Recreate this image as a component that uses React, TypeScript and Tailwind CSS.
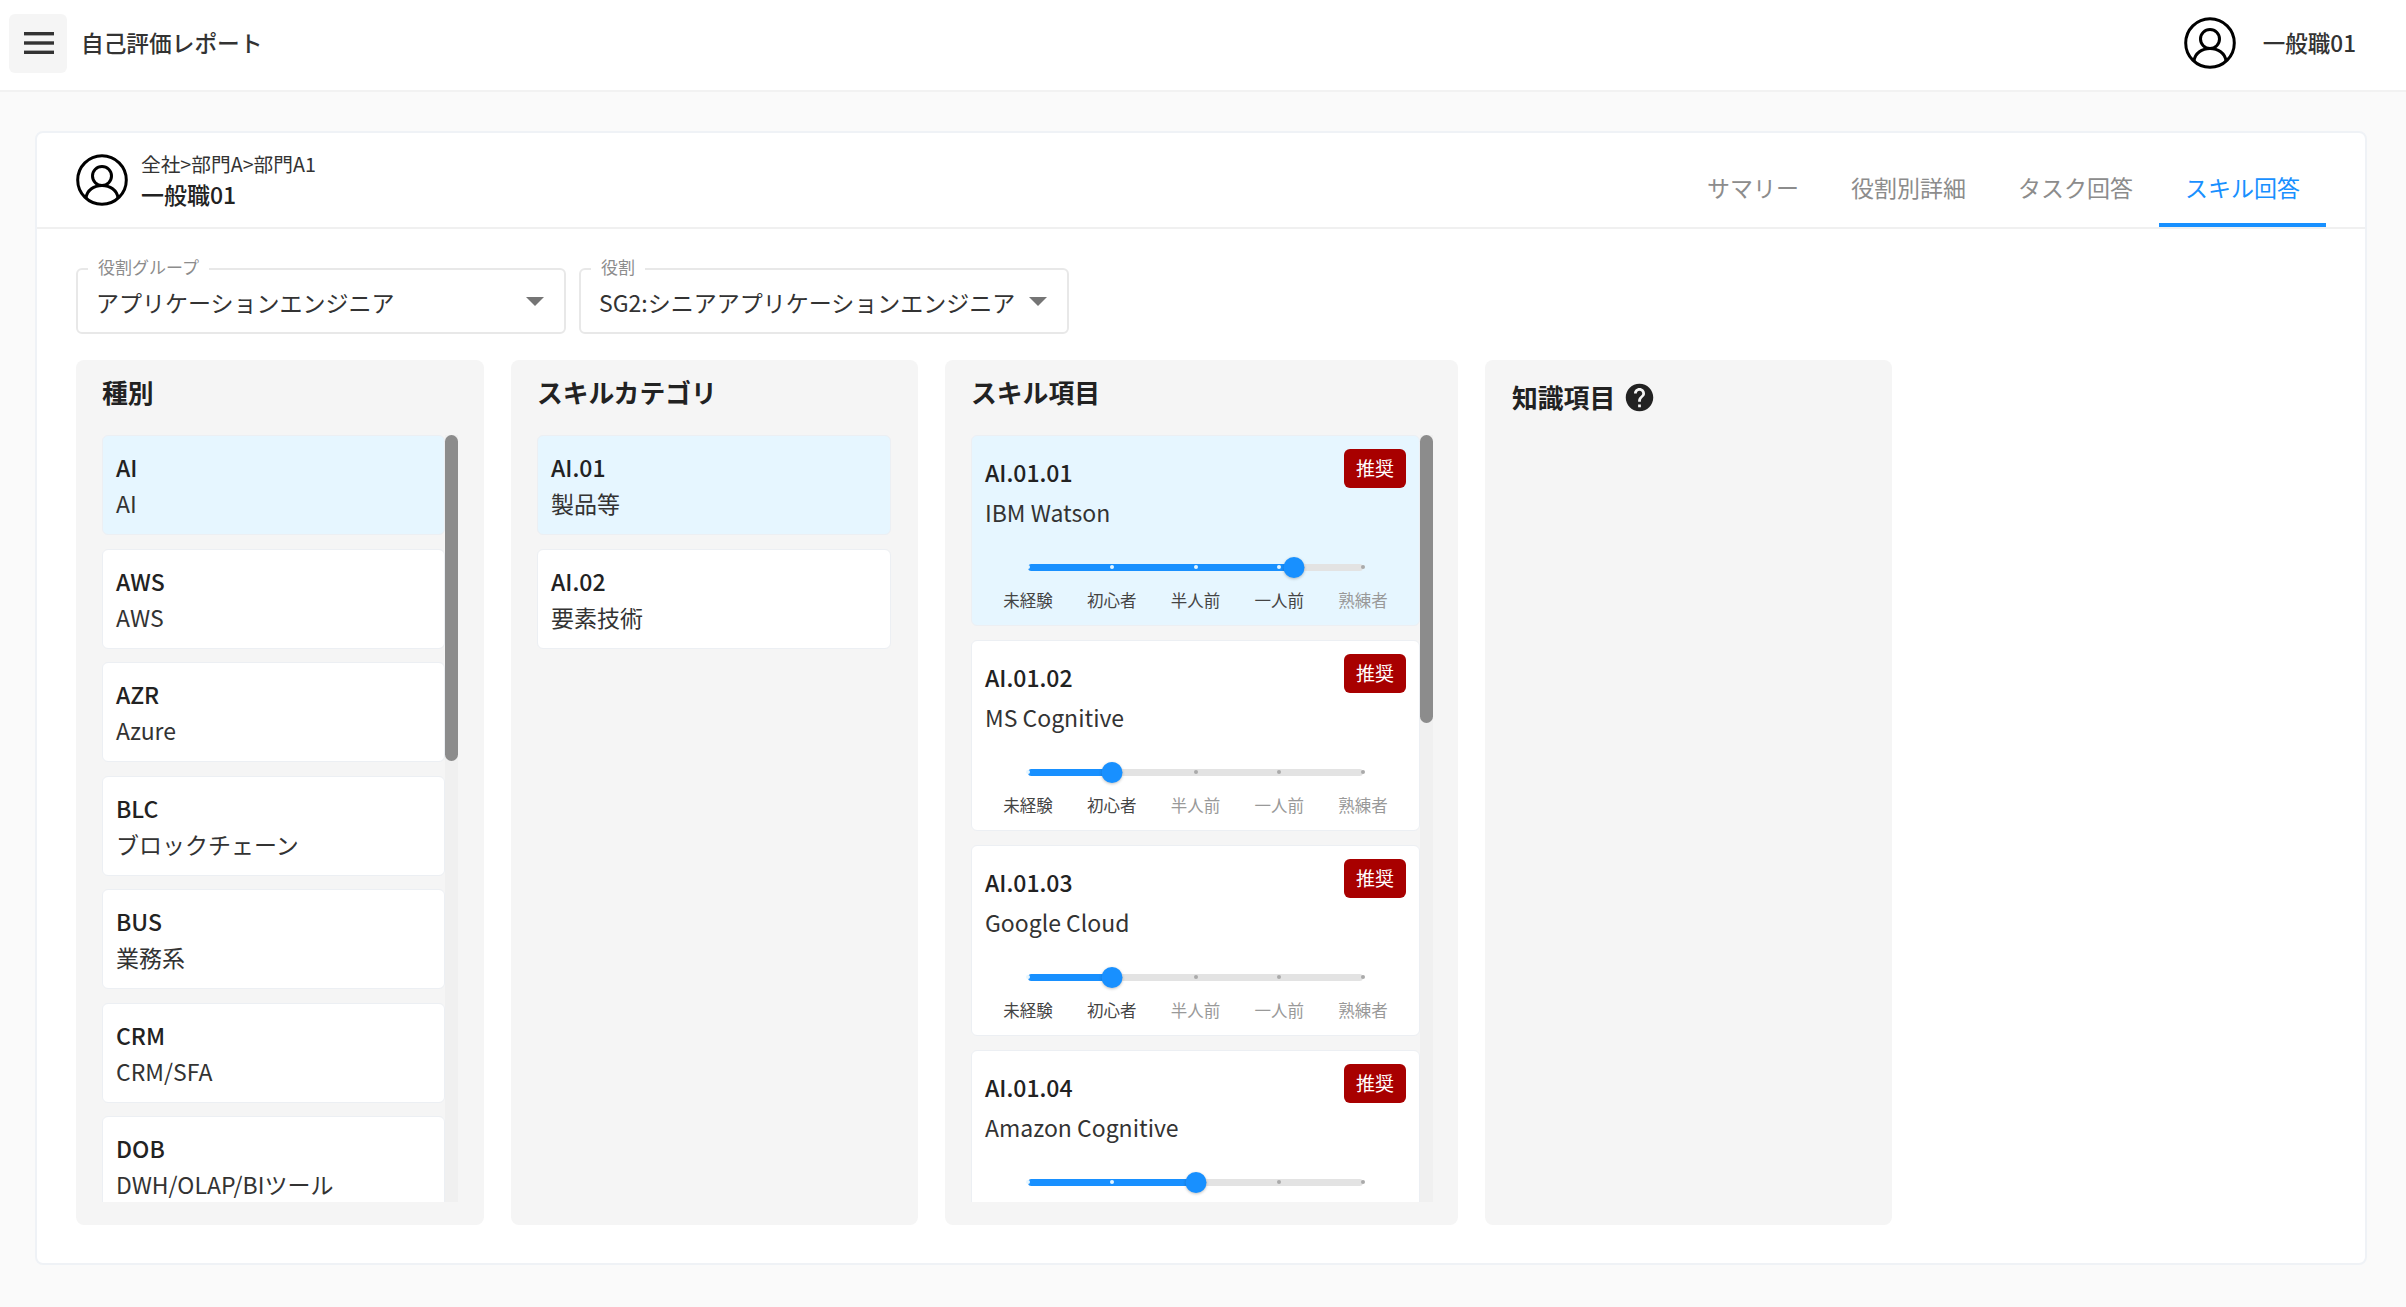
import React from "react";
import { MdHelp } from "react-icons/md";

const font = { fontFamily: '"Noto Sans CJK JP", "Noto Sans", sans-serif' };

const UserIcon = () => (
  <svg viewBox="0 0 52 52" className="h-[52px] w-[52px] shrink-0" fill="none" stroke="#000" strokeWidth="3">
    <circle cx="26" cy="26" r="24.3" />
    <circle cx="26" cy="22" r="9.5" />
    <path d="M10 44c1-8 8-12.5 16-12.5S41 36 42 44" />
  </svg>
);

const kinds = [
  ["AI", "AI"],
  ["AWS", "AWS"],
  ["AZR", "Azure"],
  ["BLC", "ブロックチェーン"],
  ["BUS", "業務系"],
  ["CRM", "CRM/SFA"],
  ["DOB", "DWH/OLAP/BIツール"],
];

const categories = [
  ["AI.01", "製品等"],
  ["AI.02", "要素技術"],
];

const skills = [
  { code: "AI.01.01", name: "IBM Watson", value: 3.18 },
  { code: "AI.01.02", name: "MS Cognitive", value: 1 },
  { code: "AI.01.03", name: "Google Cloud", value: 1 },
  { code: "AI.01.04", name: "Amazon Cognitive", value: 2 },
];

const levels = ["未経験", "初心者", "半人前", "一人前", "熟練者"];

const ListItem = ({ code, name, active }: { code: string; name: string; active?: boolean }) => (
  <div
    className={`h-[100px] shrink-0 rounded-[6px] border border-[#eceff3] px-[13px] py-[13px] ${
      active ? "bg-[#e6f6ff]" : "bg-white"
    }`}
  >
    <div className="text-[23px] leading-[37px] font-medium text-[#222]">{code}</div>
    <div className="mt-[-1px] text-[23px] leading-[37px] text-[#333]">{name}</div>
  </div>
);

const Slider = ({ value }: { value: number }) => (
  <div className="relative mx-[43px] mt-[26px] flex h-[20px] items-center">
    <div className="relative h-[7px] w-full rounded-full bg-[#e3e3e3]">
      <div className="absolute top-0 left-0 h-[7px] rounded-full bg-[#1890ff]" style={{ width: `${value * 25}%` }} />
      {[0, 1, 2, 3, 4].map((i) => (
        <span
          key={i}
          className={`absolute top-[1.5px] h-[4px] w-[4px] -translate-x-1/2 rounded-full ${
            i <= value ? "bg-[#e6f6ff]" : "bg-[#aaaaaa]"
          }`}
          style={{ left: `${i * 25}%` }}
        />
      ))}
    </div>
    <span
      className="absolute top-[-0.5px] h-[21px] w-[21px] -translate-x-1/2 rounded-full bg-[#1890ff] shadow-[0_1px_3px_rgba(0,0,0,0.25)]"
      style={{ left: `${value * 25}%` }}
    />
  </div>
);

const SkillCard = ({ code, name, value, active }: { code: string; name: string; value: number; active?: boolean }) => (
  <div
    className={`h-[191px] shrink-0 rounded-[6px] border border-[#eceff3] px-[13px] pt-[13px] ${
      active ? "bg-[#e6f6ff]" : "bg-white"
    }`}
  >
    <div className="flex items-start justify-between">
      <div className="mt-[5px] text-[23px] leading-[37px] font-medium text-[#222]">{code}</div>
      <span className="flex h-[39px] w-[62px] items-center justify-center rounded-[6px] bg-[#a80000] text-[19px] text-white">
        推奨
      </span>
    </div>
    <div className="mt-[3px] text-[23px] leading-[37px] text-[#333]">{name}</div>
    <Slider value={value} />
    <div className="mx-[1px] mt-[11px] grid grid-cols-5">
      {levels.map((label, i) => (
        <span
          key={label}
          className={`text-center text-[16.5px] leading-[24px] ${i <= value ? "text-[#444]" : "text-[#999]"}`}
        >
          {label}
        </span>
      ))}
    </div>
  </div>
);

const Scrollbar = ({ height }: { height: string }) => (
  <div className="w-[13px] shrink-0 bg-[#f0f0f0]">
    <div className={`w-[13px] rounded-full bg-[#8c8c8c] ${height}`} />
  </div>
);

const Select = ({ label, value }: { label: string; value: string }) => (
  <div className="relative flex h-[66px] w-[490px] items-center justify-between rounded-[6px] border-2 border-[#e8e8e8] pr-[20px] pl-[18px]">
    <span className="absolute top-[-15px] left-[10px] bg-white px-[10px] text-[17px] leading-[24px] text-[#8c8c8c]">
      {label}
    </span>
    <span className="mt-[2px] text-[23px] text-[#333]">{value}</span>
    <svg viewBox="0 0 18 9" className="h-[9px] w-[18px]">
      <path d="M0 0h18L9 9z" fill="#757575" />
    </svg>
  </div>
);

const tabs = ["サマリー", "役割別詳細", "タスク回答", "スキル回答"];

export default function App() {
  return (
    <div className="flex h-[1307px] w-full flex-col overflow-hidden bg-[#fafafa]" style={font}>
      <header className="flex h-[92px] shrink-0 items-center justify-between border-b-2 border-[#f2f2f2] bg-white pr-[50px] pb-[4px] pl-[9px]">
        <div className="flex items-center">
          <button className="flex h-[59px] w-[58px] items-center justify-center rounded-[6px] bg-[#f5f5f5] pl-[2px]">
            <svg viewBox="0 0 30 22" className="h-[22px] w-[30px]" fill="#333">
              <rect y="0" width="30" height="3.4" />
              <rect y="9.3" width="30" height="3.4" />
              <rect y="18.6" width="30" height="3.4" />
            </svg>
          </button>
          <span className="ml-[14px] text-[22.7px] font-medium text-[#333]">自己評価レポート</span>
        </div>
        <div className="flex items-center gap-[27px]">
          <UserIcon />
          <span className="text-[22.5px] font-medium text-[#333]">一般職01</span>
        </div>
      </header>

      <main className="mx-[35px] mt-[39px] h-[1134px] w-[2332px] shrink-0 rounded-[8px] border-2 border-[#eff2f6] bg-white">
        <div className="flex h-[96px] items-end justify-between border-b-2 border-[#f0f0f0] pr-[39px] pl-[39px]">
          <div className="mb-[16px] flex items-center gap-[13px]">
            <div className="mb-[2px]">
              <UserIcon />
            </div>
            <div>
              <div className="text-[19.7px] leading-[28px] text-[#333]">全社&gt;部門A&gt;部門A1</div>
              <div className="text-[23px] leading-[33px] font-medium text-[#222]">一般職01</div>
            </div>
          </div>
          <div className="flex">
            {tabs.map((tab, i) => (
              <div
                key={tab}
                className={`flex h-[76px] items-center border-b-[4px] px-[26px] text-[23px] ${
                  i === 3 ? "border-[#1890ff] text-[#1890ff]" : "border-transparent text-[#8c8c8c]"
                }`}
              >
                {tab}
              </div>
            ))}
          </div>
        </div>

        <div className="px-[39px] pt-[39px]">
          <div className="flex gap-[13px]">
            <Select label="役割グループ" value="アプリケーションエンジニア" />
            <Select label="役割" value="SG2:シニアアプリケーションエンジニア" />
          </div>

          <div className="mt-[26px] flex h-[865px] gap-[27px]">
            <section className="w-[408px] rounded-[8px] bg-[#f5f5f5] pt-[14px] pr-[26px] pl-[26px]">
              <h2 className="text-[25.8px] leading-[36px] font-bold text-[#222]">種別</h2>
              <div className="mt-[25px] flex h-[767px]">
                <div className="flex flex-1 flex-col gap-[13.5px] overflow-hidden">
                  {kinds.map(([code, name], i) => (
                    <ListItem key={code} code={code} name={name} active={i === 0} />
                  ))}
                </div>
                <Scrollbar height="h-[326px]" />
              </div>
            </section>

            <section className="w-[407px] rounded-[8px] bg-[#f5f5f5] pt-[14px] pr-[27px] pl-[26px]">
              <h2 className="text-[25.8px] leading-[36px] font-bold text-[#222]">スキルカテゴリ</h2>
              <div className="mt-[25px] flex flex-col gap-[13.5px]">
                {categories.map(([code, name], i) => (
                  <ListItem key={code} code={code} name={name} active={i === 0} />
                ))}
              </div>
            </section>

            <section className="w-[513px] rounded-[8px] bg-[#f5f5f5] pt-[14px] pr-[25px] pl-[26px]">
              <h2 className="text-[25.8px] leading-[36px] font-bold text-[#222]">スキル項目</h2>
              <div className="mt-[25px] flex h-[767px]">
                <div className="flex flex-1 flex-col gap-[14px] overflow-hidden">
                  {skills.map((s, i) => (
                    <SkillCard key={s.code} code={s.code} name={s.name} value={s.value} active={i === 0} />
                  ))}
                </div>
                <Scrollbar height="h-[288px]" />
              </div>
            </section>

            <section className="w-[407px] rounded-[8px] bg-[#f5f5f5] pt-[19px] pl-[27px]">
              <div className="flex items-center gap-[8px]">
                <h2 className="text-[25.8px] leading-[36px] font-bold text-[#222]">知識項目</h2>
                <MdHelp className="h-[33px] w-[33px] text-[#222]" />
              </div>
            </section>
          </div>
        </div>
      </main>
    </div>
  );
}
